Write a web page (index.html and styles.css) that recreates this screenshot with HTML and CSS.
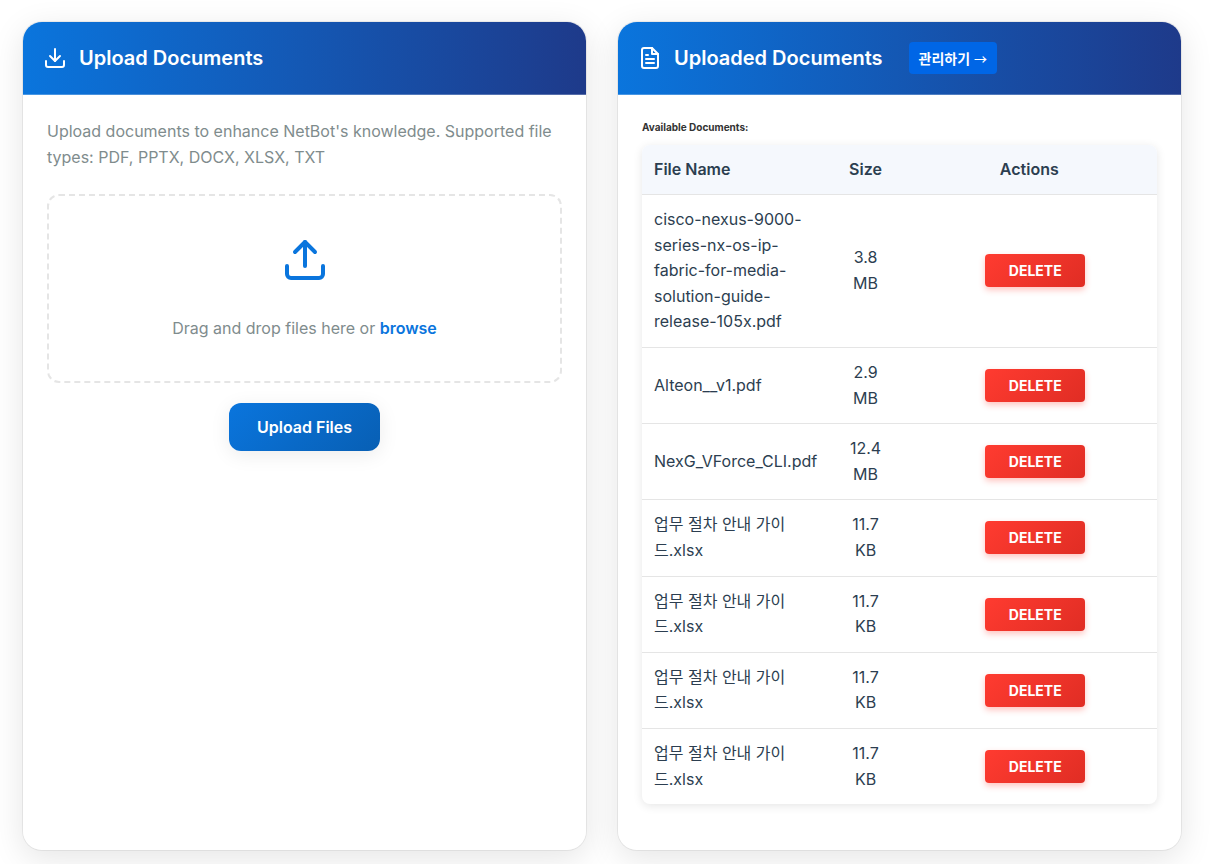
FILE: index.html
```html
<!DOCTYPE html>
<html lang="ko">
<head>
<meta charset="utf-8">
<meta name="viewport" content="width=device-width, initial-scale=1">
<title>Documents</title>
<link rel="stylesheet" href="styles.css">
</head>
<body>
<main class="page">
  <section class="card">
    <header class="card-header">
      <svg class="header-icon" viewBox="0 0 24 24" aria-hidden="true"><path d="M21 15v4a2 2 0 0 1-2 2H5a2 2 0 0 1-2-2v-4"/><path d="M7 10l5 5 5-5"/><path d="M12 15V3"/></svg>
      <h2 class="card-title">Upload Documents</h2>
    </header>
    <div class="card-body">
      <p class="intro">Upload documents to enhance NetBot's knowledge. Supported file types: PDF, PPTX, DOCX, XLSX, TXT</p>
      <div class="dropzone">
        <svg class="drop-icon" viewBox="0 0 24 24" aria-hidden="true"><path d="M21 15v4a2 2 0 0 1-2 2H5a2 2 0 0 1-2-2v-4"/><path d="M17 8l-5-5-5 5"/><path d="M12 3v12"/></svg>
        <p class="drop-text">Drag and drop files here or <a class="browse" href="#">browse</a></p>
      </div>
      <button class="upload-button" type="button">Upload Files</button>
    </div>
  </section>
  <section class="card">
    <header class="card-header">
      <svg class="header-icon" viewBox="0 0 24 24" aria-hidden="true"><path d="M14 2H6a2 2 0 0 0-2 2v16a2 2 0 0 0 2 2h12a2 2 0 0 0 2-2V8z"/><path d="M14 2v6h6"/><path d="M16 13H8"/><path d="M16 17H8"/><path d="M10 9H8"/></svg>
      <h2 class="card-title">Uploaded Documents</h2>
      <a class="manage" href="#">관리하기 <span class="arrow">→</span></a>
    </header>
    <div class="card-body">
      <h3 class="list-title">Available Documents:</h3>
      <table class="files">
        <thead>
          <tr><th class="name">File Name</th><th class="size">Size</th><th class="actions">Actions</th></tr>
        </thead>
        <tbody>
          <tr><td class="name">cisco-nexus-9000-series-nx-os-ip-fabric-for-media-solution-guide-release-105x.pdf</td><td class="size">3.8 MB</td><td class="actions"><button class="delete" type="button">DELETE</button></td></tr>
          <tr><td class="name">Alteon__v1.pdf</td><td class="size">2.9 MB</td><td class="actions"><button class="delete" type="button">DELETE</button></td></tr>
          <tr><td class="name">NexG_VForce_CLI.pdf</td><td class="size">12.4 MB</td><td class="actions"><button class="delete" type="button">DELETE</button></td></tr>
          <tr><td class="name">업무 절차 안내 가이드.xlsx</td><td class="size">11.7 KB</td><td class="actions"><button class="delete" type="button">DELETE</button></td></tr>
          <tr><td class="name">업무 절차 안내 가이드.xlsx</td><td class="size">11.7 KB</td><td class="actions"><button class="delete" type="button">DELETE</button></td></tr>
          <tr><td class="name">업무 절차 안내 가이드.xlsx</td><td class="size">11.7 KB</td><td class="actions"><button class="delete" type="button">DELETE</button></td></tr>
          <tr><td class="name">업무 절차 안내 가이드.xlsx</td><td class="size">11.7 KB</td><td class="actions"><button class="delete" type="button">DELETE</button></td></tr>
        </tbody>
      </table>
    </div>
  </section>
</main>
</body>
</html>
```
FILE: styles.css
```css
* {
  box-sizing: border-box;
}

body {
  margin: 0;
  background: #fff;
  color: #333;
  font-family: Inter, "Noto Sans CJK KR", sans-serif;
  font-size: 16px;
  line-height: 1.6;
}

.page {
  display: grid;
  grid-template-columns: 1fr 1fr;
  gap: 30px;
  min-height: 100vh;
  padding: 21px 29px 13px 22px;
}

.card {
  overflow: hidden;
  background: #fff;
  background-clip: padding-box;
  border: 1px solid rgba(0, 0, 0, 0.06);
  border-radius: 20px;
  box-shadow: 0 8px 32px rgba(0, 0, 0, 0.1);
}

.card-header {
  display: flex;
  align-items: center;
  gap: 12px;
  padding: 20px;
  color: #fff;
  background: linear-gradient(90deg, #0a75dd, #1e3a8a);
  border-bottom: 1px solid rgba(255, 255, 255, 0.25);
}

.header-icon,
.drop-icon {
  flex: none;
  fill: none;
  stroke: currentColor;
  stroke-width: 2;
  stroke-linecap: round;
  stroke-linejoin: round;
}

.header-icon {
  width: 24px;
  height: 24px;
}

.card-title {
  margin: 0;
  font-size: 20px;
  font-weight: 600;
}

.manage {
  margin-left: 14px;
  padding: 0 10px;
  border-radius: 4px;
  background: #0066e6;
  color: #fff;
  font-family: "Noto Sans CJK KR", sans-serif;
  font-size: 14px;
  font-weight: 700;
  line-height: 32px;
  text-decoration: none;
}

.arrow {
  font-size: 13px;
  font-weight: 500;
  line-height: 1;
}

.card-body {
  display: flex;
  flex-direction: column;
  padding: 24px;
}

.intro {
  margin: 0 0 24px;
  color: #7f8c8d;
}

.dropzone {
  display: flex;
  flex-direction: column;
  align-items: center;
  gap: 32px;
  padding: 40px 40px 39px;
  border: 2px dashed #e5e5e5;
  border-radius: 12px;
}

.drop-icon {
  width: 48px;
  height: 48px;
  color: #0a75dd;
}

.drop-text {
  margin: 0;
  color: #7f8c8d;
}

.browse {
  color: #0a75dd;
  font-weight: 600;
  text-decoration: none;
}

.upload-button {
  align-self: center;
  margin-top: 20px;
  padding: 0 28px;
  border: 0;
  border-radius: 12px;
  background: linear-gradient(135deg, #0a75dd, #085fb4);
  box-shadow: 0 4px 20px rgba(0, 0, 0, 0.08);
  color: #fff;
  font: inherit;
  font-weight: 600;
  line-height: 48px;
}

.list-title {
  margin: 0 0 10px;
  font-size: 10px;
  font-weight: 700;
}

.files {
  width: 100%;
  table-layout: fixed;
  border-collapse: separate;
  border-spacing: 0;
  overflow: hidden;
  border-radius: 8px;
  box-shadow: 0 2px 10px rgba(0, 0, 0, 0.1);
  color: #2c3e50;
}

.files th,
.files td {
  padding: 12px;
  border-bottom: 1px solid #e5e5e5;
  text-align: center;
  vertical-align: middle;
}

.files tbody tr:last-child td {
  border-bottom: 0;
}

.files th {
  background: #f5f8fd;
  font-weight: 600;
  line-height: 25px;
}

.files .name {
  width: 36.4%;
  text-align: left;
}

.files .size {
  width: 14%;
}

.delete {
  min-width: 100px;
  margin-left: 12px;
  padding: 0 16px;
  border: 0;
  border-radius: 4px;
  background: linear-gradient(135deg, #ff3b30, #e02d24);
  box-shadow: 0 3px 6px rgba(255, 59, 48, 0.3);
  color: #fff;
  font: inherit;
  font-size: 14px;
  font-weight: 700;
  line-height: 33px;
}
```
